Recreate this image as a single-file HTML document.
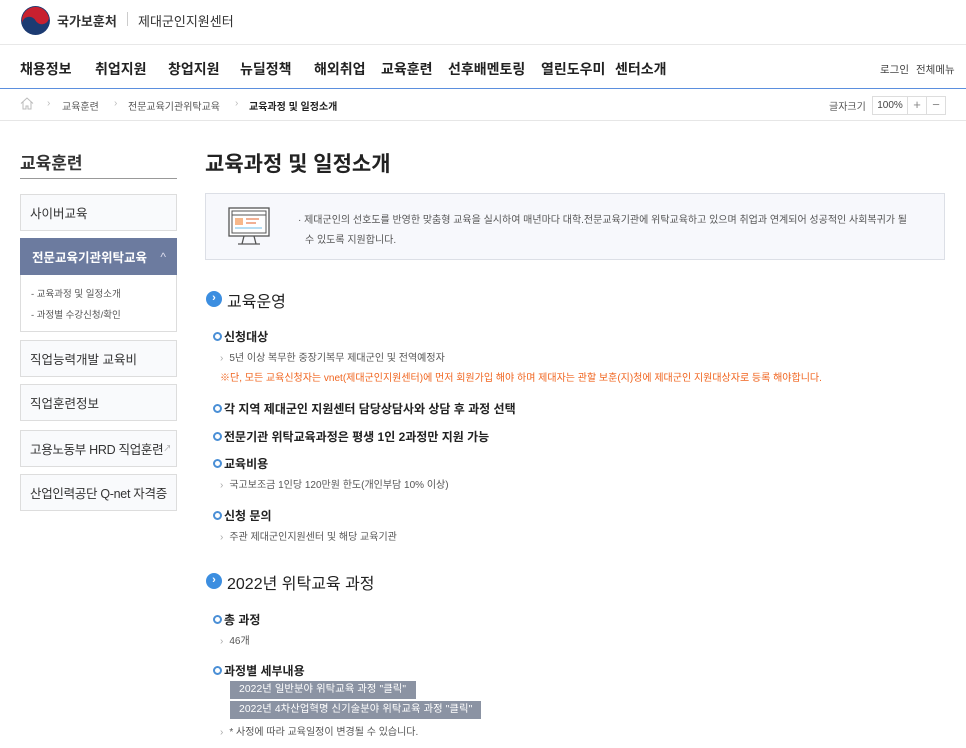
<!DOCTYPE html>
<html><head><meta charset="utf-8">
<style>
*{margin:0;padding:0;box-sizing:border-box}
body{width:966px;height:748px;overflow:hidden;background:#fff;font-family:"Liberation Sans","Noto Sans CJK KR",sans-serif;color:#222;position:relative}
.a{position:absolute;white-space:nowrap}
.nav{font-size:14px;font-weight:bold;color:#222;top:59px}
.bc{font-size:10px;color:#555;top:98px}
.chev{font-size:10px;color:#bbb;top:98px}
.sb{position:absolute;left:20px;width:157px;border:1px solid #ddd;background:#f9fafc;font-size:12.5px;color:#333;padding-left:9px;display:flex;align-items:center;white-space:nowrap;overflow:hidden}
.h3{font-size:16px;color:#222;font-weight:normal}
.ic{position:absolute;width:16px;height:16px;border-radius:50%;background:#3c8ee0;color:#fff;font-size:11px;font-weight:bold;text-align:center;line-height:15px}
.h4{font-size:12px;font-weight:bold;color:#222}
.dot{display:inline-block;width:9px;height:9px;border-radius:50%;border:2.5px solid #4a8fd6;margin-right:2px;vertical-align:0px}
.li{font-size:10px;color:#555}
.li:before{content:"›";color:#aaa;margin-right:6px}
.btn{position:absolute;left:230px;height:18px;background:#8b93a3;color:#fff;font-size:10.3px;padding:0 9px;line-height:18px;white-space:nowrap;letter-spacing:0.1px}
</style></head><body>
<svg class="a" style="left:20px;top:5px" width="31" height="31" viewBox="0 0 30 30"><circle cx="15" cy="15" r="14" fill="#1c3b72"/><path d="M2 17a13 13 0 0 1 26-4a7 7 0 0 1-13 2a7 7 0 0 0-13 2z" fill="#c8202f"/></svg>
<div class="a" style="left:57px;top:11px;font-size:13px;font-weight:bold;color:#333">국가보훈처</div>
<div class="a" style="left:127px;top:12px;width:1px;height:14px;background:#ccc"></div>
<div class="a" style="left:138px;top:11px;font-size:13px;color:#333">제대군인지원센터</div>
<div class="a" style="left:0;top:44px;width:966px;height:1px;background:#e8e8e8"></div>
<div class="a nav" style="left:20px">채용정보</div>
<div class="a nav" style="left:95px">취업지원</div>
<div class="a nav" style="left:168px">창업지원</div>
<div class="a nav" style="left:240px">뉴딜정책</div>
<div class="a nav" style="left:314px">해외취업</div>
<div class="a nav" style="left:381px">교육훈련</div>
<div class="a nav" style="left:448px">선후배멘토링</div>
<div class="a nav" style="left:541px">열린도우미</div>
<div class="a nav" style="left:615px">센터소개</div>
<div class="a" style="left:880px;top:62px;font-size:10.5px;color:#444">로그인</div>
<div class="a" style="left:916px;top:62px;font-size:10.5px;color:#444">전체메뉴</div>
<div class="a" style="left:0;top:88px;width:966px;height:1px;background:#5b8fde"></div>
<svg class="a" style="left:20px;top:97px" width="14" height="13" viewBox="0 0 14 13"><path d="M1 6.5L7 1l6 5.5M3 5v7h3V9h2v3h3V5" fill="none" stroke="#bbb" stroke-width="1"/></svg>
<div class="a chev" style="left:47px">›</div>
<div class="a bc" style="left:62px">교육훈련</div>
<div class="a chev" style="left:114px">›</div>
<div class="a bc" style="left:128px">전문교육기관위탁교육</div>
<div class="a chev" style="left:235px">›</div>
<div class="a bc" style="left:249px;color:#222;font-weight:bold">교육과정 및 일정소개</div>
<div class="a" style="left:829px;top:98px;font-size:10px;color:#555">글자크기</div>
<div class="a" style="left:872px;top:96px;width:36px;height:19px;border:1px solid #ddd;font-size:10px;color:#444;text-align:center;line-height:17px">100%</div>
<div class="a" style="left:908px;top:96px;width:19px;height:19px;border:1px solid #ddd;border-left:0;font-size:13px;color:#888;text-align:center;line-height:16px">+</div>
<div class="a" style="left:927px;top:96px;width:19px;height:19px;border:1px solid #ddd;border-left:0;font-size:13px;color:#888;text-align:center;line-height:16px">−</div>
<div class="a" style="left:0;top:120px;width:966px;height:1px;background:#e6e6e6"></div>
<div class="a" style="left:20px;top:149px;font-size:17px;font-weight:bold;color:#333">교육훈련</div>
<div class="a" style="left:20px;top:178px;width:157px;height:1px;background:#999"></div>
<div class="sb" style="top:194px;height:37px">사이버교육</div>
<div class="sb" style="top:238px;height:37px;background:#6c7b9f;border-color:#6c7b9f;color:#fff;font-weight:bold;padding-left:11px">전문교육기관위탁교육<span style="position:absolute;right:10px;font-weight:normal;font-size:12px;color:#dde">^</span></div>
<div class="a" style="left:20px;top:275px;width:157px;height:57px;border:1px solid #ddd;border-top:0;background:#fff"></div>
<div class="a" style="left:31px;top:286px;font-size:9.5px;color:#555">- 교육과정 및 일정소개</div>
<div class="a" style="left:31px;top:307px;font-size:9.5px;color:#555">- 과정별 수강신청/확인</div>
<div class="sb" style="top:340px;height:37px">직업능력개발 교육비</div>
<div class="sb" style="top:384px;height:37px">직업훈련정보</div>
<div class="sb" style="top:430px;height:37px;letter-spacing:-0.3px">고용노동부 HRD 직업훈련<span style="font-size:8px;color:#999">↗</span></div>
<div class="sb" style="top:474px;height:37px;letter-spacing:-0.3px">산업인력공단 Q-net 자격증</div>
<div class="a" style="left:205px;top:148px;font-size:21px;font-weight:bold;color:#222">교육과정 및 일정소개</div>
<div class="a" style="left:205px;top:193px;width:740px;height:67px;background:#f7f8fc;border:1px solid #dcdfe6"></div>
<svg class="a" style="left:226px;top:206px" width="46" height="42" viewBox="0 0 46 42"><rect x="3" y="2" width="40" height="28" fill="#fff" stroke="#555" stroke-width="1.3"/><rect x="6" y="5" width="34" height="22" fill="none" stroke="#555" stroke-width="1"/><line x1="6" y1="9" x2="40" y2="9" stroke="#555"/><rect x="9" y="12" width="8" height="7" fill="#f8b88a"/><line x1="20" y1="13" x2="33" y2="13" stroke="#e9865a" stroke-width="1.3"/><line x1="20" y1="17" x2="30" y2="17" stroke="#e9865a" stroke-width="1.3"/><line x1="9" y1="22" x2="36" y2="22" stroke="#9fd3ef" stroke-width="1.5"/><path d="M18 30l-2 8h14l-2-8M12 38h22" fill="none" stroke="#555" stroke-width="1.3"/></svg>
<div class="a" style="left:298px;top:211px;font-size:10px;color:#555">· 제대군인의 선호도를 반영한 맞춤형 교육을 실시하여 매년마다 대학.전문교육기관에 위탁교육하고 있으며 취업과 연계되어 성공적인 사회복귀가 될</div>
<div class="a" style="left:305px;top:231px;font-size:10px;color:#555">수 있도록 지원합니다.</div>
<div class="ic" style="left:206px;top:291px">›</div>
<div class="a h3" style="left:227px;top:288px">교육운영</div>
<div class="a h4" style="left:213px;top:328px"><span class="dot"></span>신청대상</div>
<div class="a li" style="left:220px;top:349px">5년 이상 복무한 중장기복무 제대군인 및 전역예정자</div>
<div class="a" style="left:220px;top:369px;font-size:10px;color:#f0641e">※단, 모든 교육신청자는 vnet(제대군인지원센터)에 먼저 회원가입 해야 하며 제대자는 관할 보훈(지)청에 제대군인 지원대상자로 등록 해야합니다.</div>
<div class="a h4" style="left:213px;top:400px"><span class="dot"></span>각 지역 제대군인 지원센터 담당상담사와 상담 후 과정 선택</div>
<div class="a h4" style="left:213px;top:428px"><span class="dot"></span>전문기관 위탁교육과정은 평생 1인 2과정만 지원 가능</div>
<div class="a h4" style="left:213px;top:455px"><span class="dot"></span>교육비용</div>
<div class="a li" style="left:220px;top:476px">국고보조금 1인당 120만원 한도(개인부담 10% 이상)</div>
<div class="a h4" style="left:213px;top:507px"><span class="dot"></span>신청 문의</div>
<div class="a li" style="left:220px;top:528px">주관 제대군인지원센터 및 해당 교육기관</div>
<div class="ic" style="left:206px;top:573px">›</div>
<div class="a h3" style="left:227px;top:570px">2022년 위탁교육 과정</div>
<div class="a h4" style="left:213px;top:611px"><span class="dot"></span>총 과정</div>
<div class="a li" style="left:220px;top:632px">46개</div>
<div class="a h4" style="left:213px;top:662px"><span class="dot"></span>과정별 세부내용</div>
<div class="btn" style="top:681px;width:186px">2022년 일반분야 위탁교육 과정 "클릭"</div>
<div class="btn" style="top:701px;width:251px">2022년 4차산업혁명 신기술분야 위탁교육 과정 "클릭"</div>
<div class="a li" style="left:220px;top:723px">* 사정에 따라 교육일정이 변경될 수 있습니다.</div>
</body></html>
